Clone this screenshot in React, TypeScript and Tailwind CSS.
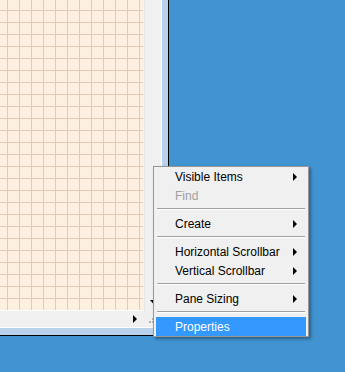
const font = "font-['Segoe_UI','Liberation_Sans',Arial,sans-serif]";

type Item = { label: string; sub?: boolean; disabled?: boolean; active?: boolean } | "sep";

const items: Item[] = [
  { label: "Visible Items", sub: true },
  { label: "Find", disabled: true },
  "sep",
  { label: "Create", sub: true },
  "sep",
  { label: "Horizontal Scrollbar", sub: true },
  { label: "Vertical Scrollbar", sub: true },
  "sep",
  { label: "Pane Sizing", sub: true },
  "sep",
  { label: "Properties", active: true },
];

const RightTri = () => (
  <svg width="4" height="8" viewBox="0 0 4 8" className="block">
    <path d="M0 0L4 4L0 8Z" fill="#000" />
  </svg>
);

const ContextMenu = () => (
  <div className="absolute left-[153px] top-[166px] w-[156px] border border-[#979797] bg-[#f0f0f0] px-[2px] shadow-[2px_2px_3px_rgba(0,0,0,0.35)]">
    {items.map((it, i) =>
      it === "sep" ? (
        <div key={i} className="h-[9px] pt-[3px] px-[1px]">
          <div className="h-px bg-[#a0a0a0]" />
          <div className="h-px bg-white" />
        </div>
      ) : (
        <div
          key={i}
          className={`flex h-[19px] items-center justify-between pl-[19px] pr-[9px] text-[12px] ${
            it.active ? "bg-[#3399ff] text-white" : it.disabled ? "text-[#a0a0a0]" : "text-black"
          }`}
        >
          <span>{it.label}</span>
          {it.sub && <RightTri />}
        </div>
      )
    )}
  </div>
);

export default function App() {
  return (
    <div className={`relative h-[372px] w-[345px] overflow-hidden bg-[#4193d1] ${font}`}>
      <div className="h-[336px] w-[169px] border-r border-b border-black bg-[#b9d1ea] pr-[6px] pb-[7px]">
        <div className="grid h-full grid-cols-[144px_17px] grid-rows-[311px_16px] border-r border-b border-white">
          {/* drawing canvas */}
          <div className="border-r border-b border-r-[#fbf1e8] border-b-white bg-[#fef0e1] bg-[linear-gradient(to_right,#e2cab4_1px,transparent_1px),linear-gradient(to_bottom,#e2cab4_1px,transparent_1px)] bg-[size:12px_12px] bg-[position:7px_10px]" />
          {/* vertical scrollbar */}
          <div className="flex flex-col justify-end border-l border-[#e6e6e6] bg-[#f0f0f0]">
            <div className="flex h-[17px] items-center justify-center pb-[2px]">
              <svg width="7" height="4" viewBox="0 0 7 4" className="block">
                <path d="M0 0H7L3.5 4Z" fill="#000" />
              </svg>
            </div>
          </div>
          {/* horizontal scrollbar */}
          <div className="flex items-center justify-end bg-[#f0f0f0]">
            <div className="flex h-full w-[17px] items-center justify-center pr-[1px]">
              <RightTri />
            </div>
          </div>
          {/* size grip */}
          <div className="flex items-end justify-start bg-[#f0f0f0] pl-[5px] pb-[4px]">
            <div className="grid grid-cols-[2px_2px] gap-px">
              <span className="h-[2px] w-[2px]" />
              <span className="h-[2px] w-[2px] bg-[#b0b0b0]" />
              <span className="h-[2px] w-[2px] bg-[#b0b0b0]" />
              <span className="h-[2px] w-[2px] bg-[#b0b0b0]" />
            </div>
          </div>
        </div>
      </div>
      <ContextMenu />
    </div>
  );
}
